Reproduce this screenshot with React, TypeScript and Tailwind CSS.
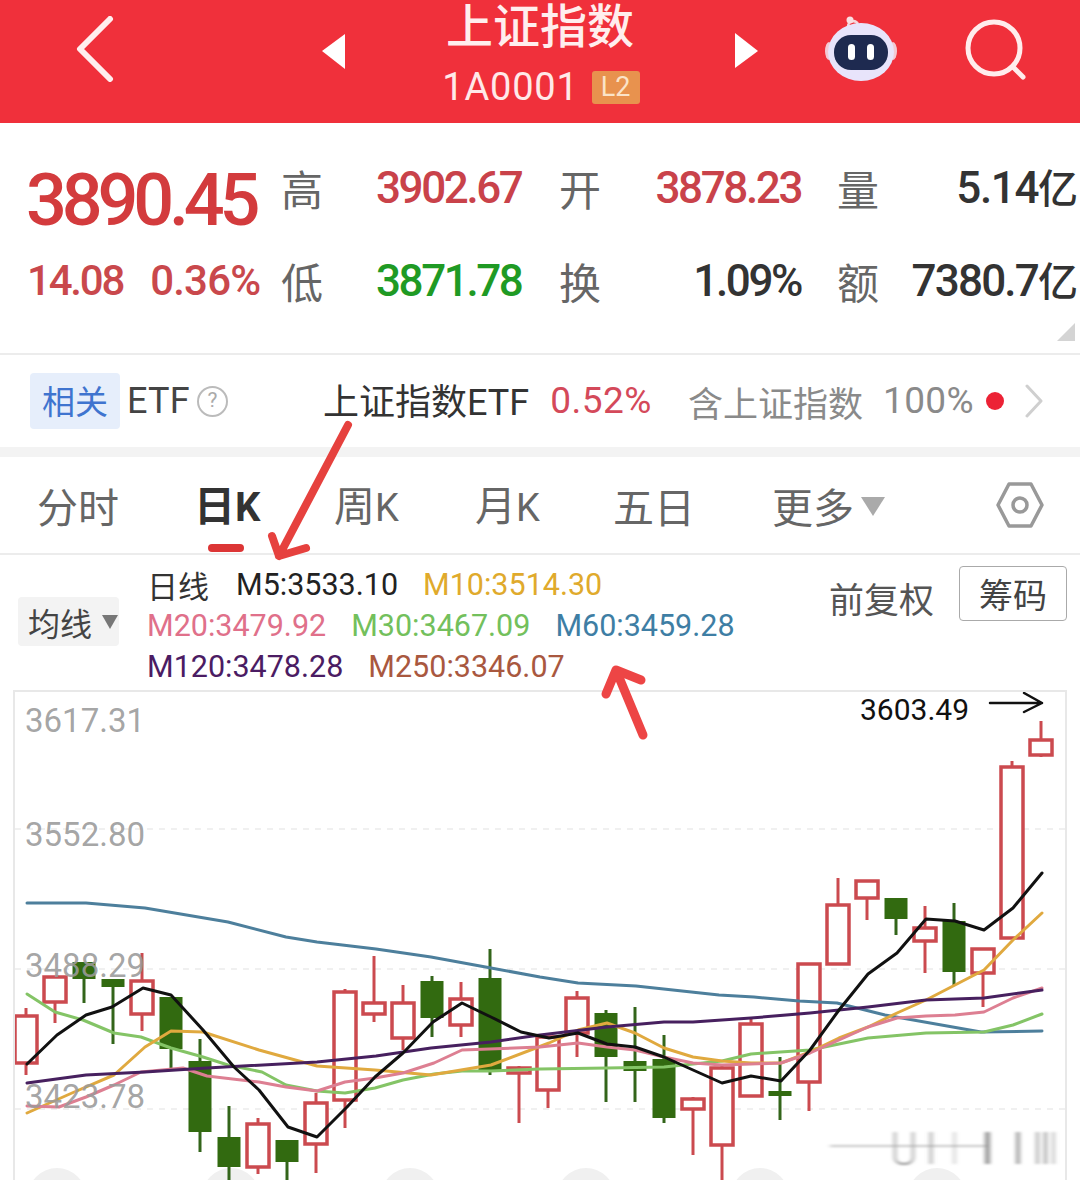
const cjk = "font-['Noto_Sans_CJK_SC','Noto_Sans',sans-serif]";
const num = "font-['Roboto','Noto_Sans_CJK_SC',sans-serif]";

// [x, wickTop, wickBottom, bodyTop, bodyBottom, up]
const candles: [number, number, number, number, number, boolean][] = [
  [26, 1008, 1075, 1016, 1063, true],
  [55, 977, 1023, 977, 1002, true],
  [84, 962, 1003, 962, 979, false],
  [113, 979, 1044, 979, 987, false],
  [142, 953, 1031, 981, 1014, true],
  [171, 997, 1070, 997, 1049, false],
  [200, 1039, 1152, 1061, 1132, false],
  [229, 1106, 1190, 1137, 1167, false],
  [258, 1118, 1174, 1124, 1167, true],
  [287, 1140, 1190, 1140, 1162, false],
  [316, 1093, 1173, 1103, 1144, true],
  [345, 989, 1128, 992, 1100, true],
  [374, 956, 1022, 1003, 1014, true],
  [403, 985, 1050, 1003, 1038, true],
  [432, 976, 1037, 981, 1018, false],
  [461, 982, 1037, 999, 1025, true],
  [490, 949, 1075, 978, 1070, false],
  [519, 1066, 1123, 1068, 1073, true],
  [548, 1037, 1108, 1037, 1090, true],
  [577, 991, 1057, 998, 1033, true],
  [606, 1010, 1102, 1013, 1057, false],
  [635, 1007, 1102, 1061, 1071, false],
  [664, 1035, 1123, 1059, 1118, false],
  [693, 1097, 1155, 1099, 1109, true],
  [722, 1065, 1190, 1068, 1145, true],
  [751, 1018, 1097, 1024, 1096, true],
  [780, 1057, 1120, 1091, 1096, false],
  [809, 964, 1111, 964, 1082, true],
  [838, 878, 964, 905, 964, true],
  [867, 881, 920, 881, 898, true],
  [896, 898, 935, 898, 919, false],
  [925, 906, 973, 928, 941, true],
  [954, 903, 985, 921, 972, false],
  [983, 948, 1007, 949, 973, true],
  [1012, 761, 938, 767, 938, true],
  [1041, 721, 757, 740, 755, true],
];

const lines = [
  {
    color: "#4d7f9c",
    points:
      "27,903 86,903 145,908 228,922 286,937 317,942 376,949 431,957 491,968 540,977 578,983 636,986 719,995 754,997 799,1001 837,1003 885,1015 981,1032 1042,1031",
  },
  {
    color: "#84c466",
    points:
      "27,994 55,1012 83,1020 114,1033 141,1037 171,1048 203,1057 228,1065 262,1072 286,1085 317,1091 345,1093 375,1088 403,1080 434,1074 462,1071 491,1071 540,1069 607,1068 664,1067 722,1061 751,1054 810,1050 868,1038 926,1033 984,1032 1013,1025 1042,1014",
  },
  {
    color: "#e0a93f",
    points:
      "27,1113 72,1093 114,1075 145,1047 171,1031 203,1032 259,1050 317,1066 375,1070 431,1075 491,1065 549,1043 578,1030 607,1023 635,1033 664,1048 693,1057 722,1061 751,1063 781,1063 810,1052 839,1038 868,1027 897,1013 926,1000 955,985 984,970 1013,940 1042,913",
  },
  {
    color: "#dd7f92",
    points:
      "27,1106 59,1107 86,1097 114,1085 141,1072 183,1068 207,1076 259,1082 286,1087 317,1091 345,1082 375,1078 403,1073 434,1063 462,1050 540,1047 578,1043 607,1047 635,1050 664,1057 693,1063 722,1065 751,1064 781,1063 810,1053 839,1040 868,1027 897,1018 926,1016 955,1015 984,1012 1013,998 1042,988",
  },
  {
    color: "#47205f",
    points:
      "27,1083 86,1075 145,1072 207,1068 317,1062 376,1056 431,1048 491,1042 540,1035 607,1027 664,1022 693,1022 751,1018 810,1013 868,1007 926,1000 984,998 1042,990",
  },
  {
    color: "#111111",
    points:
      "27,1064 57,1035 86,1015 112,1007 143,988 171,995 203,1030 234,1067 259,1090 288,1127 317,1137 347,1107 375,1077 403,1053 433,1022 462,1003 491,1017 521,1032 549,1038 578,1033 607,1044 635,1047 664,1057 693,1070 722,1083 751,1076 781,1081 810,1050 839,1010 868,974 897,953 926,919 955,921 984,930 1013,908 1042,873",
  },
];

const bubbleX = [57, 231, 410, 586, 760, 937];
// the blurred watermark in the corner: [x, width, opacity]
const blurBars = [
  [929, 4, 0.5],
  [953, 3, 0.35],
  [985, 5, 0.9],
  [1016, 4, 0.8],
  [1036, 3, 0.7],
  [1044, 3, 0.8],
  [1052, 3, 0.5],
];

const Stat = ({ children, className }: { children: React.ReactNode; className: string }) => (
  <div className={`${num} font-medium text-[44px] leading-none tracking-[-2.4px] ${className}`}>{children}</div>
);

const Label = ({ children }: { children: React.ReactNode }) => (
  <div className={`${cjk} -ml-[1px] text-[42px] leading-none text-[#666]`}>{children}</div>
);

const Yi = () => <span className={`${cjk} text-[40px] tracking-normal`}>亿</span>;

const Header = () => (
  <div className="flex h-[123px] items-start bg-[#f0303b] text-white">
    <svg className="ml-[76px] mt-[16px] h-[66px] w-[38px]" viewBox="0 0 38 66" fill="none">
      <path d="M34 3 L4 33 L34 63" stroke="#ffeeee" strokeWidth="6" strokeLinecap="round" strokeLinejoin="round" />
    </svg>
    <svg className="ml-[208px] mt-[34px] h-[35px] w-[23px]" viewBox="0 0 23 35">
      <path d="M23 0 L0 17 L23 35 Z" fill="#fff" />
    </svg>
    <div className="flex w-[390px] flex-col items-center">
      <div className={`${cjk} h-[46px] text-[47px] font-medium leading-[46px] text-[#ffeeee]`}>上证指数</div>
      <div className="ml-[2px] mt-[19px] flex items-center gap-[13px]">
        <span className={`${num} text-[38px] leading-[44px] tracking-[0.8px] text-[#ffe9e9]`}>1A0001</span>
        <span className={`${num} flex h-[33px] w-[48px] items-center justify-center rounded-[3px] bg-[#e8924e] text-[27px] leading-none text-[#fbe3c8]`}>
          L2
        </span>
      </div>
    </div>
    <svg className="mt-[33px] h-[35px] w-[23px]" viewBox="0 0 23 35">
      <path d="M0 0 L23 18 L0 35 Z" fill="#fff" />
    </svg>
    <svg className="ml-[67px] mt-[15px] h-[68px] w-[72px]" viewBox="0 0 72 68" fill="none">
      <path d="M23 12 C23 6 30 4 33 9" stroke="#f6d7dc" strokeWidth="2.5" />
      <circle cx="25" cy="5" r="3.5" fill="#f9dfe2" />
      <ellipse cx="4" cy="36" rx="4" ry="9" fill="#f3c9d3" />
      <ellipse cx="68" cy="36" rx="4" ry="9" fill="#f3c9d3" />
      <ellipse cx="36" cy="37" rx="33" ry="29" fill="#e8e4fb" />
      <rect x="9" y="20" width="54" height="35" rx="17" fill="#1e2a50" />
      <rect x="23" y="29" width="7" height="16" rx="3.5" fill="#fff" />
      <rect x="42" y="29" width="7" height="16" rx="3.5" fill="#fff" />
    </svg>
    <svg className="ml-[68px] mt-[17px] h-[64px] w-[64px]" viewBox="0 0 64 64" fill="none">
      <circle cx="29" cy="31" r="26" stroke="#ffecec" strokeWidth="5" />
      <path d="M48 50 L58 60" stroke="#ffecec" strokeWidth="5" strokeLinecap="round" />
    </svg>
  </div>
);

const Quote = () => (
  <div className="relative h-[232px] border-b-2 border-[#ececec] pl-[27px]">
    <div className="grid grid-cols-[255px_94px_184px_40px_238px_40px_200px] grid-rows-[92px_94px] items-center pt-[19px]">
      <div className={`${num} -mb-[26px] -ml-[1px] text-[72px] font-medium leading-none tracking-[-5.2px] text-[#d33b3d]`}>3890.45</div>
      <Label>高</Label>
      <Stat className="text-[#c9424a]">3902.67</Stat>
      <Label>开</Label>
      <Stat className="pr-[37px] text-right text-[#c9424a]">3878.23</Stat>
      <Label>量</Label>
      <Stat className="text-right !tracking-[-1.4px] text-[#333]">
        5.14
        <Yi />
      </Stat>

      <div className={`${num} flex text-[42px] font-medium leading-none text-[#c9484c]`}>
        <span className="tracking-[-2.2px]">14.08</span>
        <span className="ml-[27px] tracking-[-0.8px]">0.36%</span>
      </div>
      <Label>低</Label>
      <Stat className="text-[#1f9a24]">3871.78</Stat>
      <Label>换</Label>
      <Stat className="pr-[37px] text-right text-[#333]">1.09%</Stat>
      <Label>额</Label>
      <Stat className="text-right !tracking-[-1.8px] text-[#333]">
        7380.7
        <Yi />
      </Stat>
    </div>
    <div className="absolute bottom-[12px] right-[5px] h-0 w-0 border-b-[18px] border-l-[18px] border-b-[#d4d4d4] border-l-transparent" />
  </div>
);

const EtfRow = () => (
  <div className="flex h-[102px] items-center border-b-[10px] border-[#f3f3f3] pl-[30px]">
    <div className={`${cjk} flex h-[56px] w-[90px] items-center justify-center rounded-[4px] bg-[#e6eefb] text-[33px] text-[#3f74cf]`}>相关</div>
    <span className={`${num} ml-[7px] w-[70px] text-[36px] tracking-[0.2px] text-[#444]`}>ETF</span>
    <span className={`${num} flex h-[31px] w-[31px] items-center justify-center rounded-full border-2 border-[#bbb] text-[21px] text-[#aaa]`}>?</span>
    <span className={`${cjk} ml-[95px] text-[36px] leading-none text-[#333]`}>
      上证指数<span className={`${num} text-[36px]`}>ETF</span>
    </span>
    <span className={`${num} ml-[21px] text-[37px] tracking-[0.5px] text-[#d4495a]`}>0.52%</span>
    <span className={`${cjk} ml-[36px] text-[35px] leading-none text-[#8a8a8a]`}>含上证指数</span>
    <span className={`${num} ml-[20px] text-[37px] tracking-[0.4px] text-[#8a8a8a]`}>100%</span>
    <span className="ml-[12px] h-[18px] w-[18px] rounded-full bg-[#ec2235]" />
    <svg className="ml-[20px] h-[34px] w-[20px]" viewBox="0 0 20 34" fill="none">
      <path d="M3 2 L17 17 L3 32" stroke="#cfcfcf" strokeWidth="3" strokeLinecap="round" strokeLinejoin="round" />
    </svg>
  </div>
);

const Tabs = () => (
  <div className="relative flex h-[98px] items-center border-b-2 border-[#ececec] text-[41px] leading-none text-[#666]">
    <span className={`${cjk} ml-[37px] w-[157px]`}>分时</span>
    <span className={`${cjk} w-[140px] font-bold text-[#333]`}>
      日<span className="font-['Roboto'] text-[40px]">K</span>
    </span>
    <span className={`${cjk} w-[141px]`}>
      周<span className="font-['Roboto'] text-[38px]">K</span>
    </span>
    <span className={`${cjk} w-[138px]`}>
      月<span className="font-['Roboto'] text-[38px]">K</span>
    </span>
    <span className={`${cjk} w-[159px]`}>五日</span>
    <span className={cjk}>更多</span>
    <span className="ml-[7px] mt-[3px] h-0 w-0 border-x-[12px] border-t-[19px] border-x-transparent border-t-[#aaa]" />
    <svg className="ml-[111px] h-[48px] w-[48px]" viewBox="0 0 48 48" fill="none">
      <path d="M13 3 H35 L46 24 L35 45 H13 L2 24 Z" stroke="#999" strokeWidth="3.5" strokeLinejoin="round" />
      <circle cx="24" cy="24" r="7" stroke="#999" strokeWidth="3.5" />
    </svg>
    <span className="absolute bottom-[1px] left-[208px] h-[8px] w-[36px] rounded-full bg-[#dc3535]" />
  </div>
);

const Indicators = () => (
  <div className="relative flex h-[135px] items-start pl-[18px] pt-[11px]">
    <div className="mt-[31px] flex h-[49px] w-[101px] shrink-0 items-center whitespace-nowrap rounded-[4px] bg-[#f3f3f3] pl-[10px]">
      <span className={`${cjk} text-[32px] leading-none text-[#444]`}>均线</span>
      <span className="ml-[10px] h-0 w-0 border-x-[8px] border-t-[14px] border-x-transparent border-t-[#777]" />
    </div>
    <div className={`${num} ml-[28px] flex w-[640px] shrink-0 flex-col gap-[3px] text-[30.5px] leading-[38px]`}>
      <div className="flex gap-[25px]">
        <span className={`${cjk} text-[31px] text-[#333]`}>日线</span>
        <span className="ml-[2px] text-[#222]">M5:3533.10</span>
        <span className="text-[#e0aa2c]">M10:3514.30</span>
      </div>
      <div className="flex gap-[25px]">
        <span className="text-[#e0708a]">M20:3479.92</span>
        <span className="text-[#73c05c]">M30:3467.09</span>
        <span className="text-[#3e7ea4]">M60:3459.28</span>
      </div>
      <div className="flex gap-[25px]">
        <span className="text-[#4b1c63]">M120:3478.28</span>
        <span className="text-[#a9583f]">M250:3346.07</span>
      </div>
    </div>
    <span className={`${cjk} ml-[42px] mt-[8px] text-[35px] leading-[48px] text-[#555]`}>前复权</span>
    <span className={`${cjk} ml-[25px] flex h-[55px] w-[108px] items-center justify-center rounded-[4px] border border-[#aaa] text-[34px] text-[#444]`}>筹码</span>
  </div>
);

const Chart = () => (
  <div className="relative mx-[13px] h-[491px] overflow-hidden border-x-2 border-t-2 border-[#e8e8e8]">
    <svg className="absolute inset-0 h-[490px] w-[1050px]" viewBox="15 692 1050 490" fill="none">
      {[829, 969, 1109].map((y) => (
        <line key={y} x1="15" x2="1065" y1={y} y2={y} stroke="#ececec" strokeWidth="1.5" strokeDasharray="6 6" />
      ))}
      {bubbleX.map((x) => (
        <circle key={x} cx={x} cy={1197} r={29} fill="#f0f0f0" />
      ))}
      <filter id="wm" x="-10%" y="-30%" width="120%" height="160%">
        <feGaussianBlur stdDeviation="2 1" />
      </filter>
      <g filter="url(#wm)">
        <path d="M830 1146 H990" stroke="#c8c8c8" strokeWidth="2" />
        <path d="M895 1132 V1158 Q896 1164 904 1164 Q912 1164 913 1158 V1132" stroke="#9a9a9a" strokeWidth="2" />
        {blurBars.map(([x, w, o]) => (
          <rect key={x} x={x} y={1132} width={w} height={32} fill="#8a8a8a" opacity={o} />
        ))}
      </g>
      {candles.map(([x, wt, wb, bt, bb, up]) => (
        <g key={x}>
          <line x1={x} x2={x} y1={wt} y2={wb} stroke={up ? "#cb4a4f" : "#33651a"} strokeWidth="3" />
          {up ? (
            <rect x={x - 11} y={bt} width={22} height={bb - bt} fill="#fff" stroke="#cb4a4f" strokeWidth="3.5" />
          ) : (
            <rect x={x - 11.5} y={bt} width={23} height={bb - bt} fill="#326a10" />
          )}
        </g>
      ))}
      {lines.map((l) => (
        <polyline key={l.color} points={l.points} stroke={l.color} strokeWidth="3" strokeLinejoin="round" strokeLinecap="round" />
      ))}
      <path d="M990 703 H1042 M1024 693 L1042 703 L1024 712" stroke="#111" strokeWidth="2.5" strokeLinecap="round" strokeLinejoin="round" />
    </svg>
    {[
      ["3617.31", "top-[10px]"],
      ["3552.80", "top-[124px]"],
      ["3488.29", "top-[255px]"],
      ["3423.78", "top-[386px]"],
    ].map(([v, top]) => (
      <span key={v} className={`${num} absolute left-[10px] ${top} text-[33px] leading-[38px] text-[#9a9a9a]/90`}>
        {v}
      </span>
    ))}
    <span className={`${num} absolute left-[845px] top-[0px] text-[30px] leading-[36px] text-[#111]`}>3603.49</span>
  </div>
);

// hand drawn annotation arrows that sit on top of the screenshot
const Arrows = () => (
  <svg className="pointer-events-none absolute left-0 top-0 h-[1180px] w-[1080px]" viewBox="0 0 1080 1180" fill="none">
    <path d="M348 425 L279 556 M272 536 L279 556 L306 548" stroke="#e6413e" strokeWidth="8" strokeLinecap="round" strokeLinejoin="round" />
    <path d="M643 735 L616 670 M606 694 L616 670 L641 680" stroke="#ed4545" strokeWidth="9" strokeLinecap="round" strokeLinejoin="round" />
  </svg>
);

export default function App() {
  return (
    <div className="relative h-[1180px] w-[1080px] overflow-hidden bg-white">
      <Header />
      <Quote />
      <EtfRow />
      <Tabs />
      <Indicators />
      <Chart />
      <Arrows />
    </div>
  );
}
